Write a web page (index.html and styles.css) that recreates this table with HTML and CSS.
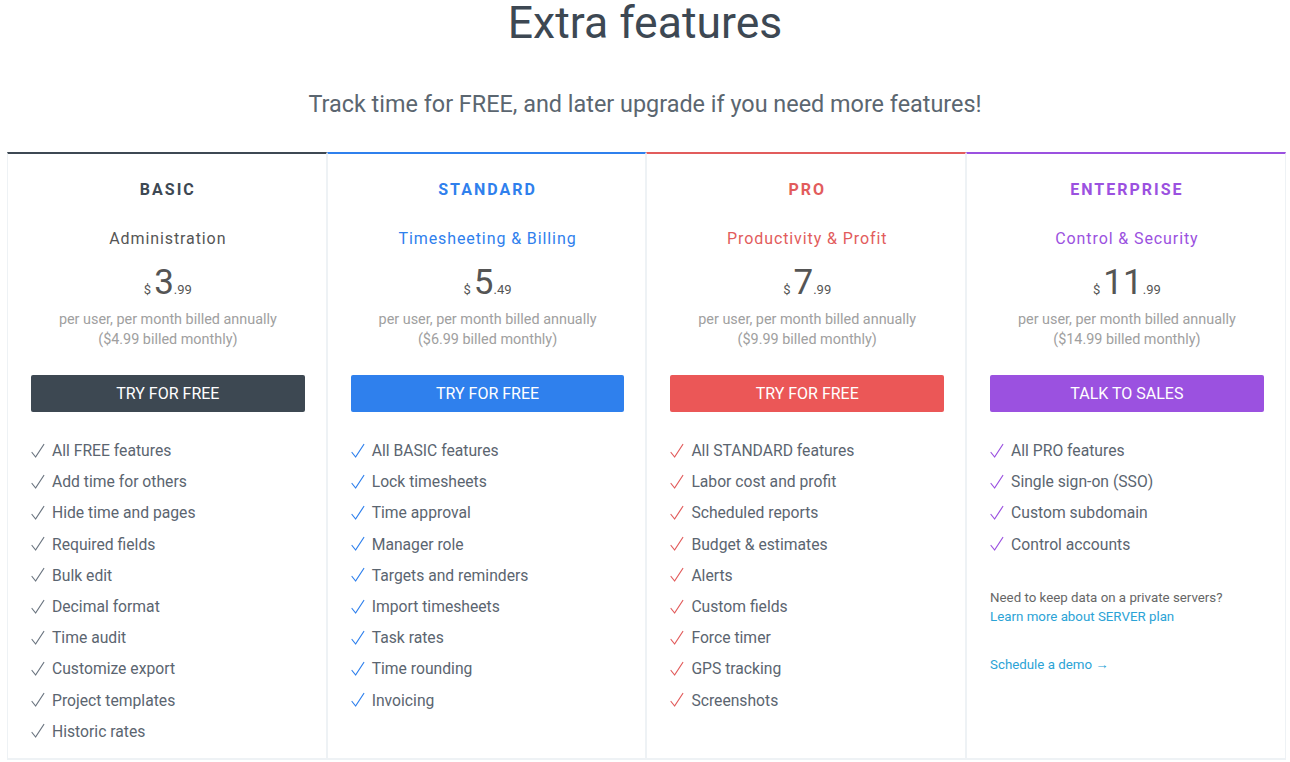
FILE: index.html
```html
<!DOCTYPE html>
<html>
<head>
<meta charset="utf-8">
<link rel="stylesheet" href="styles.css">
</head>
<body>
<h1 class="title">Extra features</h1>
<p class="lead">Track time for FREE, and later upgrade if you need more features!</p>
<div class="plans">
  <div class="plan plan-basic">
    <div class="plan-name">BASIC</div>
    <div class="plan-sub">Administration</div>
    <div class="price"><span class="cur">$</span><span class="num">3</span><span class="cents">.99</span></div>
    <div class="per">per user, per month billed annually<br>($4.99 billed monthly)</div>
    <a class="btn">TRY FOR FREE</a>
    <ul class="features">
      <li>All FREE features</li>
      <li>Add time for others</li>
      <li>Hide time and pages</li>
      <li>Required fields</li>
      <li>Bulk edit</li>
      <li>Decimal format</li>
      <li>Time audit</li>
      <li>Customize export</li>
      <li>Project templates</li>
      <li>Historic rates</li>
    </ul>
  </div>
  <div class="plan plan-standard">
    <div class="plan-name">STANDARD</div>
    <div class="plan-sub">Timesheeting &amp; Billing</div>
    <div class="price"><span class="cur">$</span><span class="num">5</span><span class="cents">.49</span></div>
    <div class="per">per user, per month billed annually<br>($6.99 billed monthly)</div>
    <a class="btn">TRY FOR FREE</a>
    <ul class="features">
      <li>All BASIC features</li>
      <li>Lock timesheets</li>
      <li>Time approval</li>
      <li>Manager role</li>
      <li>Targets and reminders</li>
      <li>Import timesheets</li>
      <li>Task rates</li>
      <li>Time rounding</li>
      <li>Invoicing</li>
    </ul>
  </div>
  <div class="plan plan-pro">
    <div class="plan-name">PRO</div>
    <div class="plan-sub">Productivity &amp; Profit</div>
    <div class="price"><span class="cur">$</span><span class="num">7</span><span class="cents">.99</span></div>
    <div class="per">per user, per month billed annually<br>($9.99 billed monthly)</div>
    <a class="btn">TRY FOR FREE</a>
    <ul class="features">
      <li>All STANDARD features</li>
      <li>Labor cost and profit</li>
      <li>Scheduled reports</li>
      <li>Budget &amp; estimates</li>
      <li>Alerts</li>
      <li>Custom fields</li>
      <li>Force timer</li>
      <li>GPS tracking</li>
      <li>Screenshots</li>
    </ul>
  </div>
  <div class="plan plan-enterprise">
    <div class="plan-name">ENTERPRISE</div>
    <div class="plan-sub">Control &amp; Security</div>
    <div class="price"><span class="cur">$</span><span class="num">11</span><span class="cents">.99</span></div>
    <div class="per">per user, per month billed annually<br>($14.99 billed monthly)</div>
    <a class="btn">TALK TO SALES</a>
    <ul class="features">
      <li>All PRO features</li>
      <li>Single sign-on (SSO)</li>
      <li>Custom subdomain</li>
      <li>Control accounts</li>
    </ul>
    <div class="note">Need to keep data on a private servers?<br><a class="link">Learn more about SERVER plan</a></div>
    <div class="demo"><a class="link">Schedule a demo →</a></div>
  </div>
</div>
</body>
</html>
```

FILE: styles.css
```css
* { box-sizing: border-box; }
html, body { margin: 0; padding: 0; background: #fff; }
body {
  font-family: Roboto, "Liberation Sans", Arial, sans-serif;
  color: #3d4853;
  width: 1290px;
  height: 762px;
  overflow: hidden;
}
.title {
  margin: 0;
  text-align: center;
  font-size: 44.5px;
  line-height: 46px;
  font-weight: 400;
  color: #3d4853;
}
.lead {
  margin: 43px 0 0;
  text-align: center;
  font-size: 23.4px;
  line-height: 30px;
  color: #5b6670;
}
.plans {
  display: flex;
  margin: 33px 0 0 7px;
  width: 1280px;
}
.plan {
  flex: 0 0 319.7px;
  height: 608px;
  border-top: 2px solid #3d4853;
  border-left: 1px solid #eef2f5;
  border-right: 1px solid #eef2f5;
  border-bottom: 2px solid #eef2f5;
  padding: 26px 21px 12px 23px;
  display: flex;
  flex-direction: column;
  align-items: stretch;
  text-align: center;
  --accent: #3d4853;
}
.plan-standard { --accent: #2f80ed; }
.plan-pro { --accent: #e25c5c; }
.plan-enterprise { --accent: #9b51e0; }
.plan { border-top-color: var(--accent); }
.plan-name {
  font-size: 16px;
  line-height: 20px;
  font-weight: 700;
  letter-spacing: 2px;
  color: var(--accent);
}
.plan-sub {
  margin-top: 27px;
  font-size: 16px;
  line-height: 24px;
  letter-spacing: 0.9px;
  color: var(--accent);
}
.plan-basic .plan-sub { color: #555; }
.price {
  margin-top: 12px;
  height: 40px;
  line-height: 40px;
  color: #555;
}
.cur { font-size: 13px; margin-right: 3px; }
.num { font-size: 35px; }
.cents { font-size: 13px; }
.per {
  margin-top: 7px;
  font-size: 14.4px;
  line-height: 20px;
  color: #a0a0a0;
}
.btn {
  display: block;
  margin-top: 25px;
  height: 37px;
  line-height: 37px;
  border-radius: 2px;
  background: #eb5757;
  color: #fff;
  font-size: 16px;
  text-align: center;
}
.plan-basic .btn { background: #3d4852; }
.plan-standard .btn { background: #2f80ed; }
.plan-pro .btn { background: #eb5757; }
.plan-enterprise .btn { background: #9b51e0; }
.features {
  list-style: none;
  margin: 23px 0 0;
  padding: 0;
  text-align: left;
}
.features li {
  font-size: 15.7px;
  line-height: 31.2px;
  color: #5b6570;
  display: flex;
  align-items: center;
}
.features li::before {
  content: "";
  flex: 0 0 14px;
  height: 16px;
  margin-right: 7px;
  background-repeat: no-repeat;
  background-image: url("data:image/svg+xml;utf8,<svg xmlns='http://www.w3.org/2000/svg' width='14' height='16' viewBox='0 0 14 16'><path d='M1 9.5 L4.6 14 L12.8 1.5' fill='none' stroke='%236b7580' stroke-width='1.2' stroke-linecap='round' stroke-linejoin='round'/></svg>");
}
.plan-standard .features li::before {
  background-image: url("data:image/svg+xml;utf8,<svg xmlns='http://www.w3.org/2000/svg' width='14' height='16' viewBox='0 0 14 16'><path d='M1 9.5 L4.6 14 L12.8 1.5' fill='none' stroke='%232f80ed' stroke-width='1.2' stroke-linecap='round' stroke-linejoin='round'/></svg>");
}
.plan-pro .features li::before {
  background-image: url("data:image/svg+xml;utf8,<svg xmlns='http://www.w3.org/2000/svg' width='14' height='16' viewBox='0 0 14 16'><path d='M1 9.5 L4.6 14 L12.8 1.5' fill='none' stroke='%23e25c5c' stroke-width='1.2' stroke-linecap='round' stroke-linejoin='round'/></svg>");
}
.plan-enterprise .features li::before {
  background-image: url("data:image/svg+xml;utf8,<svg xmlns='http://www.w3.org/2000/svg' width='14' height='16' viewBox='0 0 14 16'><path d='M1 9.5 L4.6 14 L12.8 1.5' fill='none' stroke='%239b51e0' stroke-width='1.2' stroke-linecap='round' stroke-linejoin='round'/></svg>");
}
.note {
  margin-top: 28px;
  text-align: left;
  font-size: 13.3px;
  line-height: 19px;
  color: #666;
}
.link { color: #2ba3d6; text-decoration: none; }
.demo {
  margin-top: 29px;
  text-align: left;
  font-size: 13.3px;
  line-height: 19px;
}
```
